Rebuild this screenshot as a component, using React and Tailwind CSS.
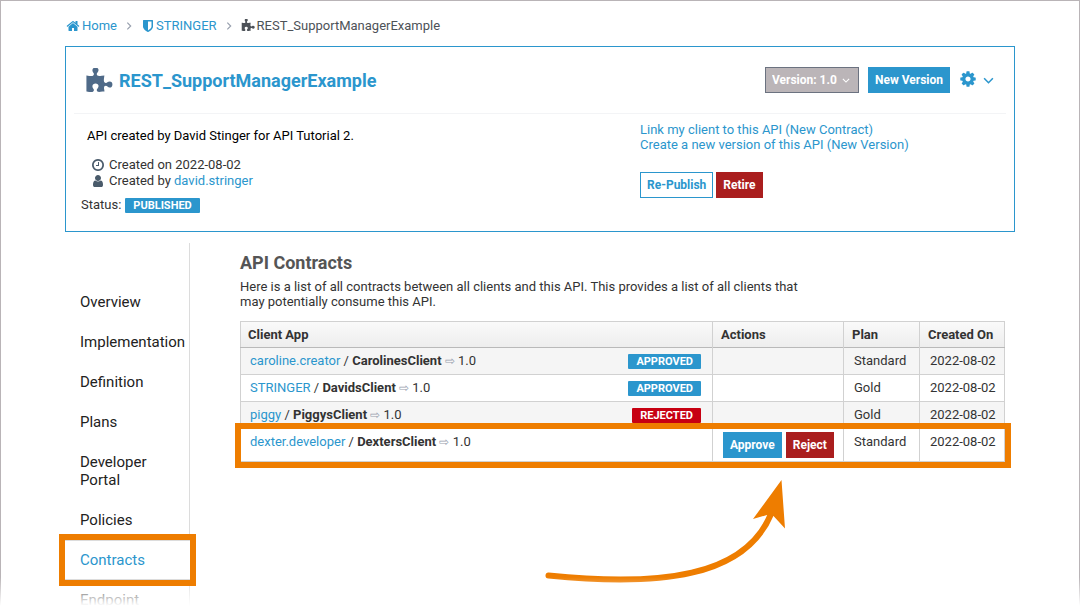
import { useState } from "react";

const navItems = [
    "Overview",
    "Implementation",
    "Definition",
    "Plans",
    "Developer Portal",
    "Policies",
    "Contracts",
    "Endpoint"
];

const contracts = [
    { id: 1, org: "caroline.creator", client: "CarolinesClient", version: "1.0", status: "APPROVED", plan: "Standard", created: "2022-08-02" },
    { id: 2, org: "STRINGER", client: "DavidsClient", version: "1.0", status: "APPROVED", plan: "Gold", created: "2022-08-02" },
    { id: 3, org: "piggy", client: "PiggysClient", version: "1.0", status: "REJECTED", plan: "Gold", created: "2022-08-02" },
    { id: 4, org: "dexter.developer", client: "DextersClient", version: "1.0", status: "PENDING", plan: "Standard", created: "2022-08-02" }
];

const icons = {
    home: "M1472 992v480q0 26-19 45t-45 19h-384v-384h-256v384h-384q-26 0-45-19t-19-45v-480q0-1 .5-3t.5-3l575-474 575 474q1 2 1 6zm223-69l-62 74q-8 9-21 11h-3q-13 0-21-7l-692-577-692 577q-12 8-24 7-13-2-21-11l-62-74q-8-10-7-23.5t11-21.5l719-599q32-26 76-26t76 26l244 204v-195q0-14 9-23t23-9h192q14 0 23 9t9 23v408l219 182q10 8 11 21.5t-7 23.5z",
    shield: "M1344 960v-640h-448v1137q119-63 213-137 235-184 235-360zm192-768v768q0 86-33.5 170.5t-83 150-118 127.5-126.5 103-121 77.5-89.5 49.5-42.5 20q-12 6-26 6t-26-6q-16-7-42.5-20t-89.5-49.5-121-77.5-126.5-103-118-127.5-83-150-33.5-170.5v-768q0-26 19-45t45-19h1152q26 0 45 19t19 45z",
    puzzle: "M1755 1062q0 81-44.5 135t-123.5 54q-41 0-77.5-17.5t-59-38-56.5-38-71-17.5q-110 0-110 124 0 39 16 115t15 115v5q-22 0-33 1-34 3-97.5 11.5t-115.5 13.5-98 5q-61 0-103-26.5t-42-83.5q0-37 17.5-71t38-56.5 38-59 17.5-77.5q0-79-54-123.5t-135-44.5q-84 0-143 45.5t-59 127.5q0 43 15 83t33.5 64.5 33.5 53 15 50.5q0 45-46 89-37 35-117 35-95 0-245-24-9-2-27.5-4t-27.5-4l-13-2q-1 0-3-1-2 0-2-1v-1024q2 1 17.5 3.5t34 5 21.5 3.5q150 24 245 24 80 0 117-35 46-44 46-89 0-22-15-50.5t-33.5-53-33.5-64.5-15-83q0-82 59-127.5t144-45.5q80 0 134 44.5t54 123.5q0 41-17.5 77.5t-38 59-38 56.5-17.5 71q0 57 42 83.5t103 26.5q64 0 180-15t163-17v2q-1 2-3.5 17.5t-5 34-3.5 21.5q-24 150-24 245 0 80 35 117 44 46 89 46 22 0 50.5-15t53-33.5 64.5-33.5 83-15q82 0 127.5 59t45.5 143z",
    clock: "M1024 544v448q0 14-9 23t-23 9h-320q-14 0-23-9t-9-23v-64q0-14 9-23t23-9h224v-352q0-14 9-23t23-9h64q14 0 23 9t9 23zm416 352q0-148-73-273t-198-198-273-73-273 73-198 198-73 273 73 273 198 198 273 73 273-73 198-198 73-273zm224 0q0 209-103 385.5t-279.5 279.5-385.5 103-385.5-103-279.5-279.5-103-385.5 103-385.5 279.5-279.5 385.5-103 385.5 103 279.5 279.5 103 385.5z",
    user: "M1536 1399q0 109-62.5 187t-150.5 78h-854q-88 0-150.5-78t-62.5-187q0-85 8.5-160.5t31.5-152 58.5-131 94-89 134.5-34.5q131 128 313 128t313-128q76 0 134.5 34.5t94 89 58.5 131 31.5 152 8.5 160.5zm-256-887q0 159-112.5 271.5t-271.5 112.5-271.5-112.5-112.5-271.5 112.5-271.5 271.5-112.5 271.5 112.5 112.5 271.5z",
    cog: "M1152 896q0-106-75-181t-181-75-181 75-75 181 75 181 181 75 181-75 75-181zm512-109v222q0 12-8 23t-20 13l-185 28q-19 54-39 91 35 50 107 138 10 12 10 25t-9 23q-27 37-99 108t-94 71q-12 0-26-9l-138-108q-44 23-91 38-16 136-29 186-7 28-36 28h-222q-14 0-24.5-8.5t-11.5-21.5l-28-184q-49-16-90-37l-141 107q-10 9-25 9-14 0-25-11-126-114-165-168-7-10-7-23 0-12 8-23 15-21 51-66.5t54-70.5q-27-50-41-99l-183-27q-13-2-21-12.5t-8-23.5v-222q0-12 8-23t19-13l186-28q14-46 39-92-40-57-107-138-10-12-10-24 0-10 9-23 26-36 98.5-107.5t94.5-71.5q13 0 26 10l138 107q44-23 91-38 16-136 29-186 7-28 36-28h222q14 0 24.5 8.5t11.5 21.5l28 184q49 16 90 37l142-107q9-9 24-9 13 0 25 10 129 119 165 170 7 8 7 22 0 12-8 23-15 21-51 66.5t-54 70.5q26 50 41 98l183 28q13 2 21 12.5t8 23.5z"
};

function Icon({ name, className }) {
    return (
        <svg viewBox="0 0 1792 1792" fill="currentColor" aria-hidden="true" className={className}>
            <path d={icons[name]} />
        </svg>
    );
}

function Chevron({ className }) {
    return (
        <svg viewBox="0 0 12 8" fill="none" stroke="currentColor" strokeWidth="1.8" aria-hidden="true" className={className}>
            <path d="M1 1.5l5 5 5-5" />
        </svg>
    );
}

function Badge({ status }) {
    const color = status === "REJECTED" ? "bg-[#c70012]" : "bg-[#2b96cd]";

    return (
        <span className={`${color} inline-block rounded-[1px] px-2 text-[11px] leading-[15px] font-bold text-white`}>
            {status}
        </span>
    );
}

function Breadcrumb() {
    return (
        <nav aria-label="Breadcrumb" className="flex h-[45px] items-center pt-1 pl-px leading-4">
            <a href="#home" className="flex items-center gap-[2px] text-[#2b96cd]">
                <Icon name="home" className="size-[14px]" />
                Home
            </a>
            <Chevron className="mx-2 h-[6px] w-2 -rotate-90 text-gray-400" />
            <a href="#stringer" className="flex items-center gap-px text-[#2b96cd]">
                <Icon name="shield" className="size-[14px]" />
                STRINGER
            </a>
            <Chevron className="mx-2 h-[6px] w-2 -rotate-90 text-gray-400" />
            <span className="flex items-center gap-[2px] text-[#4d5258]">
                <Icon name="puzzle" className="size-[14px]" />
                REST_SupportManagerExample
            </span>
        </nav>
    );
}

function ApiCard() {
    const [version, setVersion] = useState("1.0");

    return (
        <section className="border border-[#2b96cd] px-2 pb-[18px]">
            <div className="flex h-[67px] items-center border-b border-gray-100 pr-3 pl-[11px]">
                <Icon name="puzzle" className="mt-[3px] size-[28px] text-[#4f6a88]" />
                <h1 className="mt-[2px] ml-[6px] text-lg font-bold text-[#2b96cd]">REST_SupportManagerExample</h1>
                <div className="ml-auto flex items-center">
                    <div className="relative text-white">
                        <select
                            aria-label="Version"
                            value={version}
                            onChange={(e) => setVersion(e.target.value)}
                            className="block h-[26px] appearance-none border border-[#6b7280] bg-[#bbb5b8] pr-[21px] pl-[6px] text-xs font-bold"
                        >
                            <option value="1.0">Version: 1.0</option>
                        </select>
                        <Chevron className="pointer-events-none absolute top-[11px] right-[9px] h-[5px] w-2" />
                    </div>
                    <button className="ml-[9px] h-[26px] bg-[#2b96cd] px-[7px] text-xs font-bold text-white">
                        New Version
                    </button>
                    <button aria-label="Settings" className="ml-[9px] flex items-center gap-[6px] pb-[3px] text-[#2b96cd]">
                        <Icon name="cog" className="size-[18px]" />
                        <Chevron className="mt-1 h-[7px] w-[11px]" />
                    </button>
                </div>
            </div>

            <div className="flex">
                <div className="flex-1 pt-[14px] pl-[7px]">
                    <p className="pl-[6px] leading-4 text-black">API created by David Stinger for API Tutorial 2.</p>
                    <div className="mt-[13px] pl-[10px] leading-4">
                        <p className="flex items-center gap-1">
                            <Icon name="clock" className="size-[14px] text-[#4a5b6b]" />
                            Created on 2022-08-02
                        </p>
                        <p className="flex items-center gap-1">
                            <Icon name="user" className="size-[14px] text-[#4a5b6b]" />
                            <span>
                                Created by <a href="#david" className="text-[#2b96cd]">david.stringer</a>
                            </span>
                        </p>
                    </div>
                    <p className="mt-2 flex items-center gap-1 leading-4">
                        Status: <Badge status="PUBLISHED" />
                    </p>
                </div>
                <div className="w-[366px] pt-2">
                    <a href="#contract" className="block leading-[15px] text-[#2b96cd]">
                        Link my client to this API (New Contract)
                    </a>
                    <a href="#version" className="block leading-[15px] text-[#2b96cd]">
                        Create a new version of this API (New Version)
                    </a>
                    <div className="mt-5 flex gap-[3px]">
                        <button className="h-[26px] border border-[#2b96cd] bg-white px-[6px] text-xs font-bold text-[#2b96cd]">
                            Re-Publish
                        </button>
                        <button className="h-[26px] bg-[#aa1e1e] px-[7px] text-xs font-bold text-white">Retire</button>
                    </div>
                </div>
            </div>
        </section>
    );
}

function SideNav({ active }) {
    return (
        <nav className="w-[125px] shrink-0 border-r border-[#dcdcdc] pt-[39px]">
            <ul>
                {navItems.map((item) => (
                    <li
                        key={item}
                        className={
                            item === active
                                ? "relative z-20 -mr-px border-y border-[#dcdcdc] bg-white py-[10px] outline-6 outline-[#ee7d00]"
                                : "py-[11px]"
                        }
                    >
                        <a
                            href="#nav"
                            className={`block pl-[15px] text-[15px] leading-[18px] ${item === active ? "text-[#2b96cd]" : "text-[#222]"}`}
                        >
                            {item}
                        </a>
                    </li>
                ))}
            </ul>
        </nav>
    );
}

function ContractsTable() {
    return (
        <table className="mt-3 w-full table-fixed border-collapse border border-[#d1d1d1] text-left">
            <thead>
                <tr className="h-[26px] border-b border-b-[#b9b9b9] bg-linear-to-b from-[#fafafa] to-[#ededed]">
                    <th className="border-r border-[#d1d1d1] px-[7px] font-bold">Client App</th>
                    <th className="w-[131px] border-r border-[#d1d1d1] px-2 font-bold">Actions</th>
                    <th className="w-[76px] border-r border-[#d1d1d1] px-2 font-bold">Plan</th>
                    <th className="w-[85px] px-2 font-bold">Created On</th>
                </tr>
            </thead>
            <tbody>
                {contracts.map((c) => {
                    const pending = c.status === "PENDING";

                    return (
                        <tr
                            key={c.id}
                            className={`border-b border-[#d1d1d1] align-top leading-4 odd:bg-[#f5f5f5] ${
                                pending ? "relative h-[33px] outline-6 outline-[#ee7d00]" : "h-[27px]"
                            }`}
                        >
                            <td className="border-r border-[#d1d1d1] pt-[5px] pr-[11px] pl-[9px]">
                                <div className="flex items-center justify-between">
                                    <span>
                                        <a href="#org" className="text-[#2b96cd]">{c.org}</a> / <b>{c.client}</b>{" "}
                                        <span className="text-xs text-gray-400">⇨</span> {c.version}
                                    </span>
                                    {!pending && <Badge status={c.status} />}
                                </div>
                            </td>
                            <td className="border-r border-[#d1d1d1] pl-[10px]">
                                {pending && (
                                    <div className="flex gap-1 pt-[3px]">
                                        <button className="h-[26px] bg-[#2b96cd] px-[7px] text-xs font-bold text-white">Approve</button>
                                        <button className="h-[26px] bg-[#aa1e1e] px-[7px] text-xs font-bold text-white">Reject</button>
                                    </div>
                                )}
                            </td>
                            <td className="border-r border-[#d1d1d1] pt-[5px] pl-[10px]">{c.plan}</td>
                            <td className="pt-[5px] pl-[10px]">{c.created}</td>
                        </tr>
                    );
                })}
            </tbody>
        </table>
    );
}

function App() {
    return (
        <div className="relative h-screen overflow-hidden bg-white font-['Roboto',sans-serif] text-[13px] text-[#333]">
            <div className="min-h-full border-x border-t border-[#b9b4b7] px-16">
                <Breadcrumb />
                <ApiCard />

                <div className="mt-[11px] flex">
                    <SideNav active="Contracts" />

                    <main className="min-w-0 flex-1 pt-2 pr-[10px] pl-[50px]">
                        <h2 className="text-lg leading-6 font-bold text-[#555]">API Contracts</h2>
                        <p className="mt-1 w-3/4 leading-[15px]">
                            Here is a list of all contracts between all clients and this API. This provides a list of all
                            clients that may potentially consume this API.
                        </p>
                        <ContractsTable />

                        {/* arrow pointing at the approve / reject buttons */}
                        <svg viewBox="0 0 300 130" aria-hidden="true" className="mt-2 ml-[290px] h-[130px] w-[300px]">
                            <path d="M18.5 105.5C130 117 215 107 241 44" fill="none" stroke="#ee7d00" strokeWidth="6" strokeLinecap="round" />
                            <path d="M251.5 10L255 58.5L243.5 46L237 45L223 49Z" fill="#ee7d00" />
                        </svg>
                    </main>
                </div>
            </div>

            {/* page fades out at the bottom */}
            <div className="pointer-events-none absolute inset-x-0 bottom-0 z-10 h-8 bg-linear-to-b from-transparent to-white to-90%" />
        </div>
    );
}

export default App;
